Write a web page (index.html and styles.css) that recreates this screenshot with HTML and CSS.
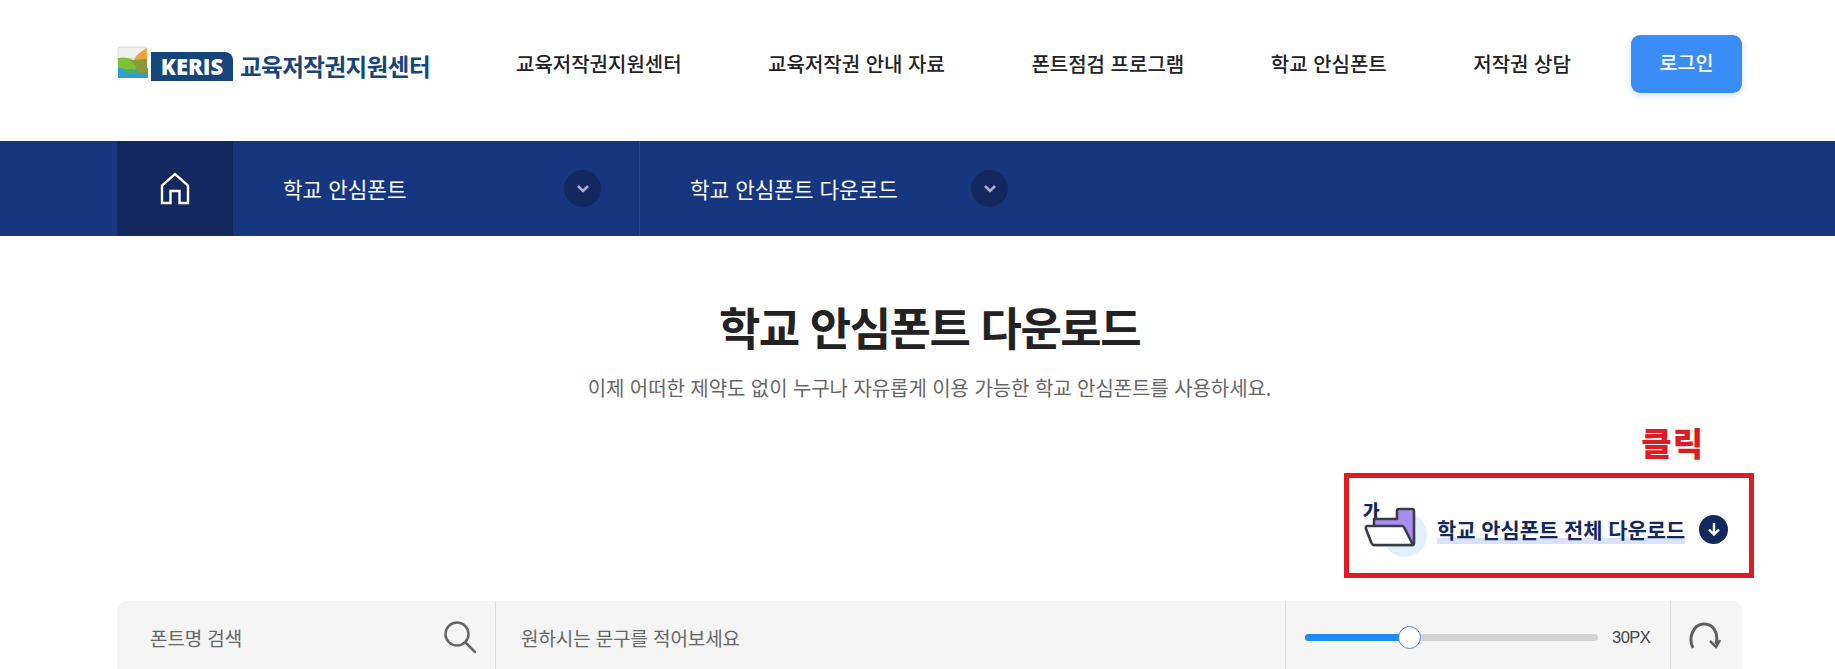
FILE: index.html
```html
<!DOCTYPE html>
<html lang="ko">
<head>
  <meta charset="UTF-8" />
  <meta name="viewport" content="width=device-width, initial-scale=1.0" />
  <title>학교 안심폰트 다운로드</title>
  <link rel="stylesheet" href="styles.css">
</head>
<body>
  <header class="site-header">
    <div class="wrap header-inner">
      <a class="logo" href="#">
        <svg class="logo-mark" width="31" height="33" viewBox="0 0 31 33">
          <path d="M3 1h26v10L1 14V3a2 2 0 0 1 2-2z" fill="#eef0ee" stroke="#d9dcd8"/>
          <path d="M1 22h30v10H1z" fill="#2f9fd6"/>
          <path d="M30 2v12l-14 2C19 9 24 5 30 2z" fill="#f0a13c"/>
          <path d="M1 12c9-2 17 1 20 8l-4 5c-3-1-13-3-16-3z" fill="#7fbf3a"/>
          <path d="M13 14l17-1v14h-10c0-6-2-10-7-13z" fill="#8a9a35"/>
          <path d="M5 25c6-3 12-3 17 2h-12z" fill="#3fae6a"/>
        </svg>
        <span class="logo-box">KERIS</span>
        <span class="logo-name">교육저작권지원센터</span>
      </a>
      <nav class="main-nav">
        <a href="#">교육저작권지원센터</a>
        <a href="#">교육저작권 안내 자료</a>
        <a href="#">폰트점검 프로그램</a>
        <a href="#">학교 안심폰트</a>
        <a href="#">저작권 상담</a>
      </nav>
      <a class="login-btn" href="#">로그인</a>
    </div>
  </header>

  <div class="crumb-bar">
    <div class="wrap crumb-inner">
      <a class="crumb-home" href="#">
        <svg width="32" height="34" viewBox="0 0 32 34" fill="none" stroke="#fff" stroke-width="2.4" stroke-linejoin="miter">
          <path d="M3 31V13.5L16 2l13 11.5V31h-8.500V19h-9v12z"/>
        </svg>
      </a>
      <div class="crumb-item crumb-first">
        <span>학교 안심폰트</span>
        <i class="crumb-arrow"><svg width="14" height="10" viewBox="0 0 14 10" fill="none" stroke="#a9b4cc" stroke-width="2.600"><path d="M2 2l5 5 5-5"/></svg></i>
      </div>
      <div class="crumb-item crumb-second">
        <span>학교 안심폰트 다운로드</span>
        <i class="crumb-arrow"><svg width="14" height="10" viewBox="0 0 14 10" fill="none" stroke="#a9b4cc" stroke-width="2.600"><path d="M2 2l5 5 5-5"/></svg></i>
      </div>
    </div>
  </div>

  <main class="wrap">
    <div class="page-head">
      <h1>학교 안심폰트 다운로드</h1>
      <p>이제 어떠한 제약도 없이 누구나 자유롭게 이용 가능한 학교 안심폰트를 사용하세요.</p>
    </div>

    <div class="download-area">
      <div class="click-note">클릭</div>
      <a class="download-box" href="#">
        <span class="folder">
          <span class="folder-ga">가</span>
          <svg width="70" height="60" viewBox="0 0 70 60">
            <circle cx="45" cy="35" r="22" fill="#dff1fa"/>
            <path d="M14 27v-8h23v-8a2 2 0 0 1 2-2h13a2 2 0 0 1 2 2v32a2 2 0 0 1-2 2H14z" fill="#a98cf0" stroke="#3c3c46" stroke-width="2.600" stroke-linejoin="round"/>
            <path d="M7 26h35c1 0 2 1 2.500 2L53 45H14c-1 0-2-1-2.500-2L6 29c-.500-2 0-3 1-3z" fill="#fff" stroke="#3c3c46" stroke-width="2.600" stroke-linejoin="round"/>
          </svg>
        </span>
        <span class="download-label">학교 안심폰트 전체 다운로드</span>
        <i class="download-arrow">
          <svg width="16" height="16" viewBox="0 0 16 16" fill="none" stroke="#fff" stroke-width="2.400"><path d="M8 2v11M3 8.500l5 5 5-5"/></svg>
        </i>
      </a>
    </div>

    <div class="toolbar">
      <div class="tool tool-search">
        <span class="placeholder">폰트명 검색</span>
        <svg width="34" height="34" viewBox="0 0 34 34" fill="none" stroke="#666" stroke-width="2.500" stroke-linecap="round"><circle cx="14" cy="14" r="11.500"/><path d="M23 23l9 9"/></svg>
      </div>
      <div class="tool tool-sample">
        <span class="placeholder">원하시는 문구를 적어보세요</span>
      </div>
      <div class="tool tool-size">
        <div class="slider"><div class="slider-fill"></div><div class="slider-thumb"></div></div>
        <span class="size-value">30PX</span>
      </div>
      <div class="tool tool-reset">
        <svg width="34" height="30" viewBox="0 0 34 30" fill="none" stroke="#5f5f5f" stroke-width="3"><path d="M6 26C1 16 6 3 16 2c10-1 16 9 13 20"/><path d="M23 19l6 6 4-7" stroke-width="2.500"/></svg>
      </div>
    </div>
  </main>
</body>
</html>
```

FILE: styles.css
```css
/* Base */
* { margin: 0; padding: 0; box-sizing: border-box; }
html, body { height: 100%; overflow: hidden; }
body {
  font-family: "Noto Sans CJK KR", "Noto Sans", sans-serif;
  background: #fff;
  color: #222;
}
a { color: inherit; text-decoration: none; }
i { font-style: normal; }
.wrap { width: 1625px; margin-left: 117px; }

/* Header */
.site-header { height: 141px; }
.header-inner {
  display: flex;
  align-items: center;
  height: 100%;
  padding-bottom: 14px;
}
.logo { display: flex; align-items: center; width: 399px; }
.logo-mark { margin-right: 3px; margin-top: -2px; }
.logo-box {
  width: 82px;
  height: 29px;
  margin-top: 5px;
  background: #14467c;
  border-radius: 0 8px 0 0;
  color: #fff;
  font-family: "Open Sans", sans-serif;
  font-weight: 800;
  font-size: 22px;
  line-height: 29px;
  text-align: center;
}
.logo-name {
  margin-left: 7px;
  margin-top: 5px;
  font-size: 23.500px;
  font-weight: 700;
  letter-spacing: -.5px;
  color: #14467c;
  white-space: nowrap;
}
.main-nav {
  display: flex;
  gap: 86.500px;
  flex: 1;
  font-size: 20px;
  font-weight: 500;
  white-space: nowrap;
}
.login-btn {
  width: 111px;
  height: 58px;
  background: #3a8cf7;
  border-radius: 9px;
  box-shadow: 0 2px 6px rgba(58, 140, 247, .25);
  color: #fff;
  font-size: 19.500px;
  font-weight: 500;
  line-height: 54px;
  text-align: center;
}

/* Breadcrumb bar */
.crumb-bar { height: 95px; background: #163780; }
.crumb-inner { display: flex; height: 100%; }
.crumb-home {
  display: flex;
  align-items: center;
  justify-content: center;
  width: 116px;
  background: #12285e;
}
.crumb-item {
  display: flex;
  align-items: center;
  justify-content: space-between;
  color: #fff;
  font-size: 21.300px;
}
.crumb-first {
  width: 407px;
  padding: 0 38px 0 50px;
  border-right: 1px solid #2a4a8f;
}
.crumb-second { width: 418px; padding: 0 50px; }
.crumb-arrow {
  display: flex;
  align-items: center;
  justify-content: center;
  width: 37px;
  height: 37px;
  border-radius: 50%;
  background: #12285e;
}

/* Title */
.page-head { padding-top: 58px; text-align: center; }
.page-head h1 {
  font-size: 45px;
  line-height: 66px;
  font-weight: 700;
  letter-spacing: -1.500px;
  color: #222;
}
.page-head p {
  margin-top: 13px;
  font-size: 20px;
  line-height: 30px;
  letter-spacing: -.08px;
  color: #666;
}

/* Download link */
.download-area { display: flex; flex-direction: column; align-items: flex-end; }
.click-note {
  margin: 17px 38px 9px 0;
  color: #e01b24;
  font-size: 33px;
  line-height: 44px;
  font-weight: 900;
  letter-spacing: 1px;
}
.download-box {
  display: flex;
  align-items: center;
  width: 410px;
  height: 105px;
  margin-right: -12px;
  padding: 7px 0 0 11px;
  border: 5px solid #e01b24;
}
.folder { position: relative; width: 70px; height: 60px; margin-top: 2px; }
.folder svg { position: relative; display: block; }
.folder-ga {
  position: absolute;
  left: 3px;
  top: 0;
  color: #12285e;
  font-size: 18px;
  line-height: 20px;
  font-weight: 900;
}
.download-label {
  margin-left: 7px;
  font-size: 20.900px;
  line-height: 30px;
  font-weight: 700;
  color: #12285e;
  white-space: nowrap;
  background: linear-gradient(transparent 80%, #d9e2f8 80%);
}
.download-arrow {
  display: flex;
  align-items: center;
  justify-content: center;
  width: 29px;
  height: 29px;
  margin-left: 14px;
  border-radius: 50%;
  background: #12285e;
}

/* Toolbar */
.toolbar {
  display: flex;
  height: 90px;
  margin-top: 23px;
  background: #f5f5f5;
  border-radius: 9px;
  font-size: 19px;
  letter-spacing: -.1px;
  color: #666;
}
.tool { display: flex; align-items: center; height: 100%; border-right: 1px solid #ddd; padding-bottom: 18px; }
.tool-search { width: 379px; justify-content: space-between; padding-left: 33px; padding-right: 18px; }
.tool-sample { width: 790px; padding-left: 25px; }
.tool-size { width: 385px; padding-left: 19px; }
.tool-reset { flex: 1; border-right: 0; padding-left: 16px; }
.slider { position: relative; width: 293px; height: 7px; border-radius: 4px; background: #d2d2d2; }
.slider-fill { width: 103px; height: 100%; border-radius: 4px 0 0 4px; background: #1e8cf5; }
.slider-thumb {
  position: absolute;
  left: 93px;
  top: -8px;
  width: 23px;
  height: 23px;
  border-radius: 50%;
  background: #fff;
  border: 1px solid #3c8de0;
}
.size-value { margin-left: 14px; font-family: "Liberation Sans", sans-serif; font-size: 16.500px; color: #444; letter-spacing: -.5px; }
```
